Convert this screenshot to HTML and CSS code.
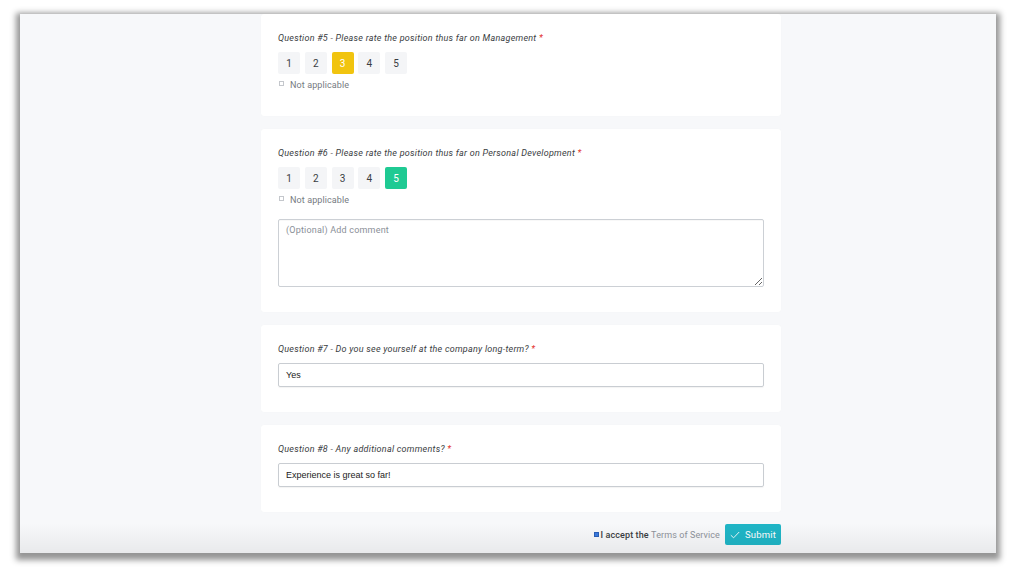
FILE: index.html
```html
<!DOCTYPE html>
<html>
<head>
<meta charset="utf-8">
<link rel="stylesheet" href="styles.css">
</head>
<body>
<div class="window">
  <div class="stack">
    <section class="card">
      <div class="q">Question #5 - Please rate the position thus far on Management <span class="req">*</span></div>
      <div class="rates">
        <span class="rate">1</span><span class="rate">2</span><span class="rate on-yellow">3</span><span class="rate">4</span><span class="rate">5</span>
      </div>
      <label class="na"><span class="box"></span>Not applicable</label>
    </section>
    <section class="card">
      <div class="q">Question #6 - Please rate the position thus far on Personal Development <span class="req">*</span></div>
      <div class="rates">
        <span class="rate">1</span><span class="rate">2</span><span class="rate">3</span><span class="rate">4</span><span class="rate on-green">5</span>
      </div>
      <label class="na"><span class="box"></span>Not applicable</label>
      <textarea class="comment" placeholder="(Optional) Add comment"></textarea>
    </section>
    <section class="card">
      <div class="q">Question #7 - Do you see yourself at the company long-term? <span class="req">*</span></div>
      <div class="field">Yes</div>
    </section>
    <section class="card">
      <div class="q">Question #8 - Any additional comments? <span class="req">*</span></div>
      <div class="field">Experience is great so far!</div>
    </section>
    <div class="footer">
      <span class="tick"></span>
      <span class="accept">I accept the <span class="tos">Terms of Service</span></span>
      <button class="submit"><svg width="10" height="8" viewBox="0 0 10 8"><path d="M0.8 4.2 L3.6 6.8 L9.2 1" fill="none" stroke="#fff" stroke-width="0.9"/></svg>Submit</button>
    </div>
  </div>
  <div class="fade"></div>
</div>
</body>
</html>
```

FILE: styles.css
```css
html, body {
  margin: 0;
  padding: 0;
  background: #ffffff;
}
body {
  padding: 14px 20px 15px 20px;
  font-family: Roboto, "Liberation Sans", sans-serif;
}
.window {
  position: relative;
  height: 539px;
  box-sizing: border-box;
  padding-left: 26px;
  overflow: hidden;
  background: #f7f8fa;
  box-shadow: 0 3px 6px 4px rgba(0, 0, 0, 0.42);
}
.stack {
  width: 520px;
  margin: 0 auto;
  display: flex;
  flex-direction: column;
  gap: 13px;
}
.card {
  background: #ffffff;
  border-radius: 3px;
  padding: 18px 17px 25px 17px;
  display: flex;
  flex-direction: column;
  box-shadow: 0 0 1px rgba(0,0,0,0.04);
}
.q {
  font-size: 9px;
  line-height: 12px;
  font-style: italic;
  color: #3a3d42;
  letter-spacing: 0.25px;
  margin-bottom: 8px;
}
.req { color: #e3342f; }
.rates {
  display: flex;
  gap: 4.75px;
}
.rate {
  width: 22px;
  height: 22px;
  border-radius: 2px;
  background: #f4f5f7;
  color: #3a3d42;
  font-size: 10px;
  display: flex;
  align-items: center;
  justify-content: center;
}
.rate.on-yellow { background: #f1c40f; color: #fff; }
.rate.on-green { background: #1fca93; color: #fff; }
.na {
  margin-top: 5px;
  display: flex;
  align-items: center;
  font-size: 9px;
  line-height: 12px;
  color: #767b82;
  letter-spacing: 0.1px;
}
.box {
  width: 3px;
  height: 3px;
  border: 0.5px solid #c4c7cc;
  margin: -3px 6px 0 1px;
  background: #fff;
}
.comment {
  margin-top: 13px;
  height: 68px;
  box-sizing: border-box;
  border: 1px solid #ccd0d5;
  border-radius: 2px;
  padding: 5px 7px;
  font-family: Roboto, "Liberation Sans", sans-serif;
  font-size: 9px;
  letter-spacing: 0.2px;
  resize: vertical;
  box-shadow: inset 0 1px 1px rgba(0,0,0,0.03);
}
.comment::placeholder { color: #8a8f97; }
.field {
  height: 24px;
  box-sizing: border-box;
  border: 1px solid #c9cdd2;
  border-radius: 2px;
  padding: 0 7px;
  display: flex;
  align-items: center;
  font-family: "Liberation Sans", Arial, sans-serif;
  font-size: 9px;
  color: #222;
  box-shadow: 0 1px 1px rgba(0,0,0,0.05);
}
.footer {
  display: flex;
  justify-content: flex-end;
  align-items: center;
  height: 21px;
  margin-top: -1px;
}
.tick {
  width: 3px;
  height: 3px;
  background: #3a7be0;
  border: 0.5px solid #2a5fb8;
  margin-right: 2px;
}
.accept {
  font-size: 9px;
  color: #3a3d42;
  font-weight: 500;
  letter-spacing: 0.1px;
}
.tos {
  color: #8e939b;
  font-weight: 400;
}
.submit {
  margin-left: 5px;
  height: 21px;
  width: 56px;
  border: none;
  border-radius: 2px;
  background: #1fb5c6;
  color: #ffffff;
  font-family: Roboto, "Liberation Sans", sans-serif;
  font-size: 9.5px;
  letter-spacing: 0.2px;
  display: flex;
  align-items: center;
  justify-content: center;
  gap: 5px;
  padding: 0;
}
.fade {
  position: absolute;
  left: 0;
  right: 0;
  bottom: 0;
  height: 30px;
  background: linear-gradient(to bottom, rgba(0,0,0,0), rgba(0,0,0,0.06));
  pointer-events: none;
}
```
